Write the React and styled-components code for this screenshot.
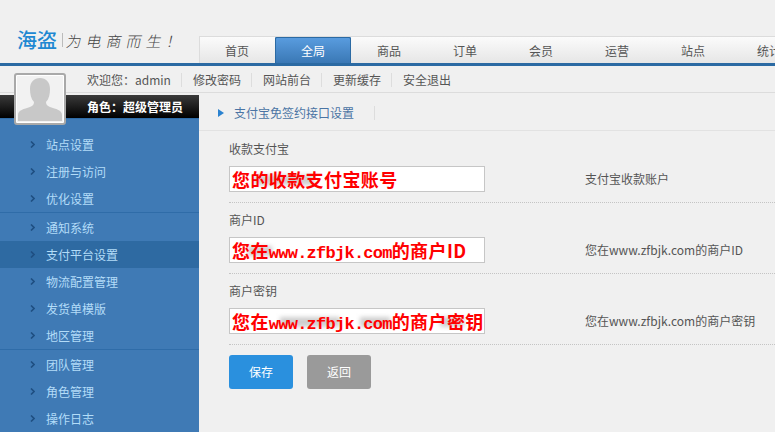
import React from 'react'
import styled, { createGlobalStyle } from 'styled-components'

const GlobalStyle = createGlobalStyle`
    html, body { margin: 0; padding: 0; height: 100%; background: #f0f0f0; overflow: hidden; }
    body { font-family: "Noto Sans CJK SC", "Liberation Sans", sans-serif; font-size: 12px; color: #555; }
    * { box-sizing: border-box; }
`

const Page = styled.div`
    position: relative;
    width: 775px;
    height: 432px;
    overflow: hidden;
    display: flex;
    flex-direction: column;
`

const Header = styled.div`
    height: 66px;
    flex: none;
    display: flex;
    align-items: flex-end;
    border-bottom: 3px solid #2b6aa3;
`

const Logo = styled.div`
    width: 199px;
    height: 63px;
    flex: none;
    padding: 17px 0 0 17px;
    display: flex;
    align-items: center;
`

const LogoName = styled.span`
    font-size: 20px;
    line-height: 28px;
    font-weight: 500;
    color: #1e88d2;
`

const LogoDivider = styled.span`
    width: 1px;
    height: 14px;
    margin: 0 4px 0 5px;
    background: #bbb;
`

const Slogan = styled.span`
    font-size: 15px;
    color: #444;
    letter-spacing: 5px;
    font-weight: 300;
    transform: skewX(-12deg);
    white-space: nowrap;
`

const Tabs = styled.div`
    display: flex;
    height: 27px;
    flex: 1;
    overflow: hidden;
    background: linear-gradient(#fbfbfb, #e6e6e6);
    border-top: 1px solid #dcdcdc;
    box-shadow: inset 1px 0 0 #dcdcdc;
`

const Tab = styled.div`
    width: 76px;
    flex: none;
    text-align: center;
    line-height: 27px;
    font-size: 12px;
    color: ${p => (p.$active ? '#fff' : '#555')};
    background: ${p => (p.$active ? 'linear-gradient(#5a9de0, #3a78b5)' : 'transparent')};
    box-shadow: ${p => (p.$active ? 'inset 0 1px 0 #2b6aa3, inset 1px 0 0 #2b6aa3, inset -1px 0 0 #2b6aa3' : 'none')};
    border-radius: ${p => (p.$active ? '2px 2px 0 0' : '0')};
`

const SubBar = styled.div`
    height: 27px;
    flex: none;
    display: flex;
    align-items: center;
    padding: 1px 0 0 87px;
    border-bottom: 1px solid #dcdcdc;
`

const SubLink = styled.span`
    padding: 0 10px 0 11px;
    line-height: 14px;
    color: #555;
    border-right: 1px solid #ddd;
    &:first-child { padding-left: 0; }
    &:last-child { border-right: none; }
`

const Main = styled.div`
    flex: 1;
    display: grid;
    grid-template-columns: 199px 1fr;
    min-height: 0;
    padding-top: 1px;
`

const Sidebar = styled.div`
    background: #3f7ab5;
    overflow: hidden;
    margin-top: 1px;
`

const RoleBar = styled.div`
    height: 23px;
    background: linear-gradient(#3a3a3a, #000);
    color: #fff;
    font-weight: 700;
    line-height: 23px;
    padding-left: 87px;
`

const MenuGroup = styled.div`
    border-top: 1px solid #2f6ca8;
    padding-top: ${p => (p.$first ? '12px' : '1px')};
`

const MenuItem = styled.div`
    height: 27px;
    display: flex;
    align-items: center;
    padding-left: 30px;
    color: #b3dcf8;
    font-size: 12px;
    background: ${p => (p.$active ? '#2e6aa2' : 'transparent')};
`

const Chevron = styled.svg`
    width: 5px;
    height: 7px;
    margin-right: 11px;
    flex: none;
`

const Content = styled.div`
    min-width: 0;
`

const Crumbs = styled.div`
    height: 37px;
    display: flex;
    align-items: center;
    padding: 1px 0 0 19px;
    border-bottom: 1px solid #e2e2e2;
    color: #4a74a4;
`

const CrumbArrow = styled.svg`
    width: 6px;
    height: 8px;
    margin-right: 10px;
`

const CrumbText = styled.span`
    padding-right: 20px;
    line-height: 14px;
    border-right: 1px solid #ddd;
`

const Form = styled.div`
    padding: 9px 0 0 30px;
`

const Row = styled.div`
    height: 63px;
    margin-bottom: 8px;
    border-bottom: 1px dotted #c4c4c4;
`

const Label = styled.div`
    height: 26px;
    line-height: 18px;
    color: #555;
`

const FieldLine = styled.div`
    display: flex;
    align-items: center;
`

const Field = styled.div`
    position: relative;
    width: 256px;
    height: 26px;
    flex: none;
    background: #fff;
    border: 1px solid #c6c6c6;
    padding-left: 2px;
    color: #f00;
    font-size: 18px;
    font-weight: 700;
    letter-spacing: 0.4px;
    line-height: 24px;
    white-space: nowrap;
    overflow: hidden;
`

const FieldText = styled.span`
    position: relative;
`

const Mono = styled.span`
    font-family: "Liberation Mono", monospace;
    font-size: 17px;
    letter-spacing: -0.75px;
`

const Smudge = styled.i`
    position: absolute;
    top: 8px;
    height: 10px;
    left: ${p => p.$left}px;
    width: ${p => p.$width}px;
    background: #cfcfcf;
    filter: blur(2px);
`

const Hint = styled.div`
    margin: -1px 0 0 100px;
    color: #555;
    white-space: nowrap;
`

const Buttons = styled.div`
    display: flex;
    gap: 14px;
    padding-top: 2px;
`

const Button = styled.div`
    width: 64px;
    height: 34px;
    border-radius: 3px;
    color: #fff;
    text-align: center;
    line-height: 34px;
    background: ${p => p.$color};
`

const Avatar = styled.div`
    position: absolute;
    left: 14px;
    top: 73px;
    width: 52px;
    height: 52px;
    background: #f2f2f2;
    border: 2px solid #a9a9a9;
    border-radius: 3px;
    box-shadow: inset 0 0 0 1px #fff;
`

const AvatarIcon = styled.svg`
    display: block;
    width: 48px;
    height: 48px;
`

const tabs = ['首页', '全局', '商品', '订单', '会员', '运营', '站点', '统计']
const links = ['欢迎您：admin', '修改密码', '网站前台', '更新缓存', '安全退出']
const menu = [
    ['站点设置', '注册与访问', '优化设置'],
    ['通知系统', '支付平台设置', '物流配置管理', '发货单模版', '地区管理'],
    ['团队管理', '角色管理', '操作日志'],
]

const rows = [
    {
        label: '收款支付宝',
        value: <>您的收款支付宝账号</>,
        hint: '支付宝收款账户',
        smudges: [[24, 60]],
    },
    {
        label: '商户ID',
        value: <>您在<Mono>www.zfbjk.com</Mono>的商户ID</>,
        hint: '您在www.zfbjk.com的商户ID',
        smudges: [[18, 24]],
    },
    {
        label: '商户密钥',
        value: <>您在<Mono>www.zfbjk.com</Mono>的商户密钥</>,
        hint: '您在www.zfbjk.com的商户密钥',
        smudges: [[50, 60], [130, 30], [210, 24]],
    },
]

export default function App() {
    return (
        <Page>
            <GlobalStyle />
            <Header>
                <Logo>
                    <LogoName>海盗</LogoName>
                    <LogoDivider />
                    <Slogan>为电商而生！</Slogan>
                </Logo>
                <Tabs>
                    {tabs.map(t => <Tab key={t} $active={t === '全局'}>{t}</Tab>)}
                </Tabs>
            </Header>
            <SubBar>
                {links.map(l => <SubLink key={l}>{l}</SubLink>)}
            </SubBar>
            <Main>
                <Sidebar>
                    <RoleBar>角色：超级管理员</RoleBar>
                    {menu.map((group, i) => (
                        <MenuGroup key={i} $first={i === 0}>
                            {group.map(item => (
                                <MenuItem key={item} $active={item === '支付平台设置'}>
                                    <Chevron viewBox="0 0 5 7">
                                        <path d="M1 0.5 L4 3.5 L1 6.5" fill="none" stroke="#1f4f82" strokeWidth="1.6" />
                                    </Chevron>
                                    {item}
                                </MenuItem>
                            ))}
                        </MenuGroup>
                    ))}
                </Sidebar>
                <Content>
                    <Crumbs>
                        <CrumbArrow viewBox="0 0 6 8">
                            <path d="M0 0 L6 4 L0 8 Z" fill="#2a82d0" />
                        </CrumbArrow>
                        <CrumbText>支付宝免签约接口设置</CrumbText>
                    </Crumbs>
                    <Form>
                        {rows.map(r => (
                            <Row key={r.label}>
                                <Label>{r.label}</Label>
                                <FieldLine>
                                    <Field>
                                        {r.smudges.map(([left, width]) => (
                                            <Smudge key={left} $left={left} $width={width} />
                                        ))}
                                        <FieldText>{r.value}</FieldText>
                                    </Field>
                                    <Hint>{r.hint}</Hint>
                                </FieldLine>
                            </Row>
                        ))}
                        <Buttons>
                            <Button $color="#2a90de">保存</Button>
                            <Button $color="#9a9a9a">返回</Button>
                        </Buttons>
                    </Form>
                </Content>
            </Main>
            <Avatar>
                <AvatarIcon viewBox="0 0 48 48">
                    <path d="M2 46 V40 C2 35 8 34 14 32 C17 31 18 29 18 27 C15 24 14 19 14 14 C14 7 18 3 24 3 C30 3 34 7 34 14 C34 19 33 24 30 27 C30 29 31 31 34 32 C40 34 46 35 46 40 V46 Z" fill="#c8c8c8" />
                </AvatarIcon>
            </Avatar>
        </Page>
    )
}
